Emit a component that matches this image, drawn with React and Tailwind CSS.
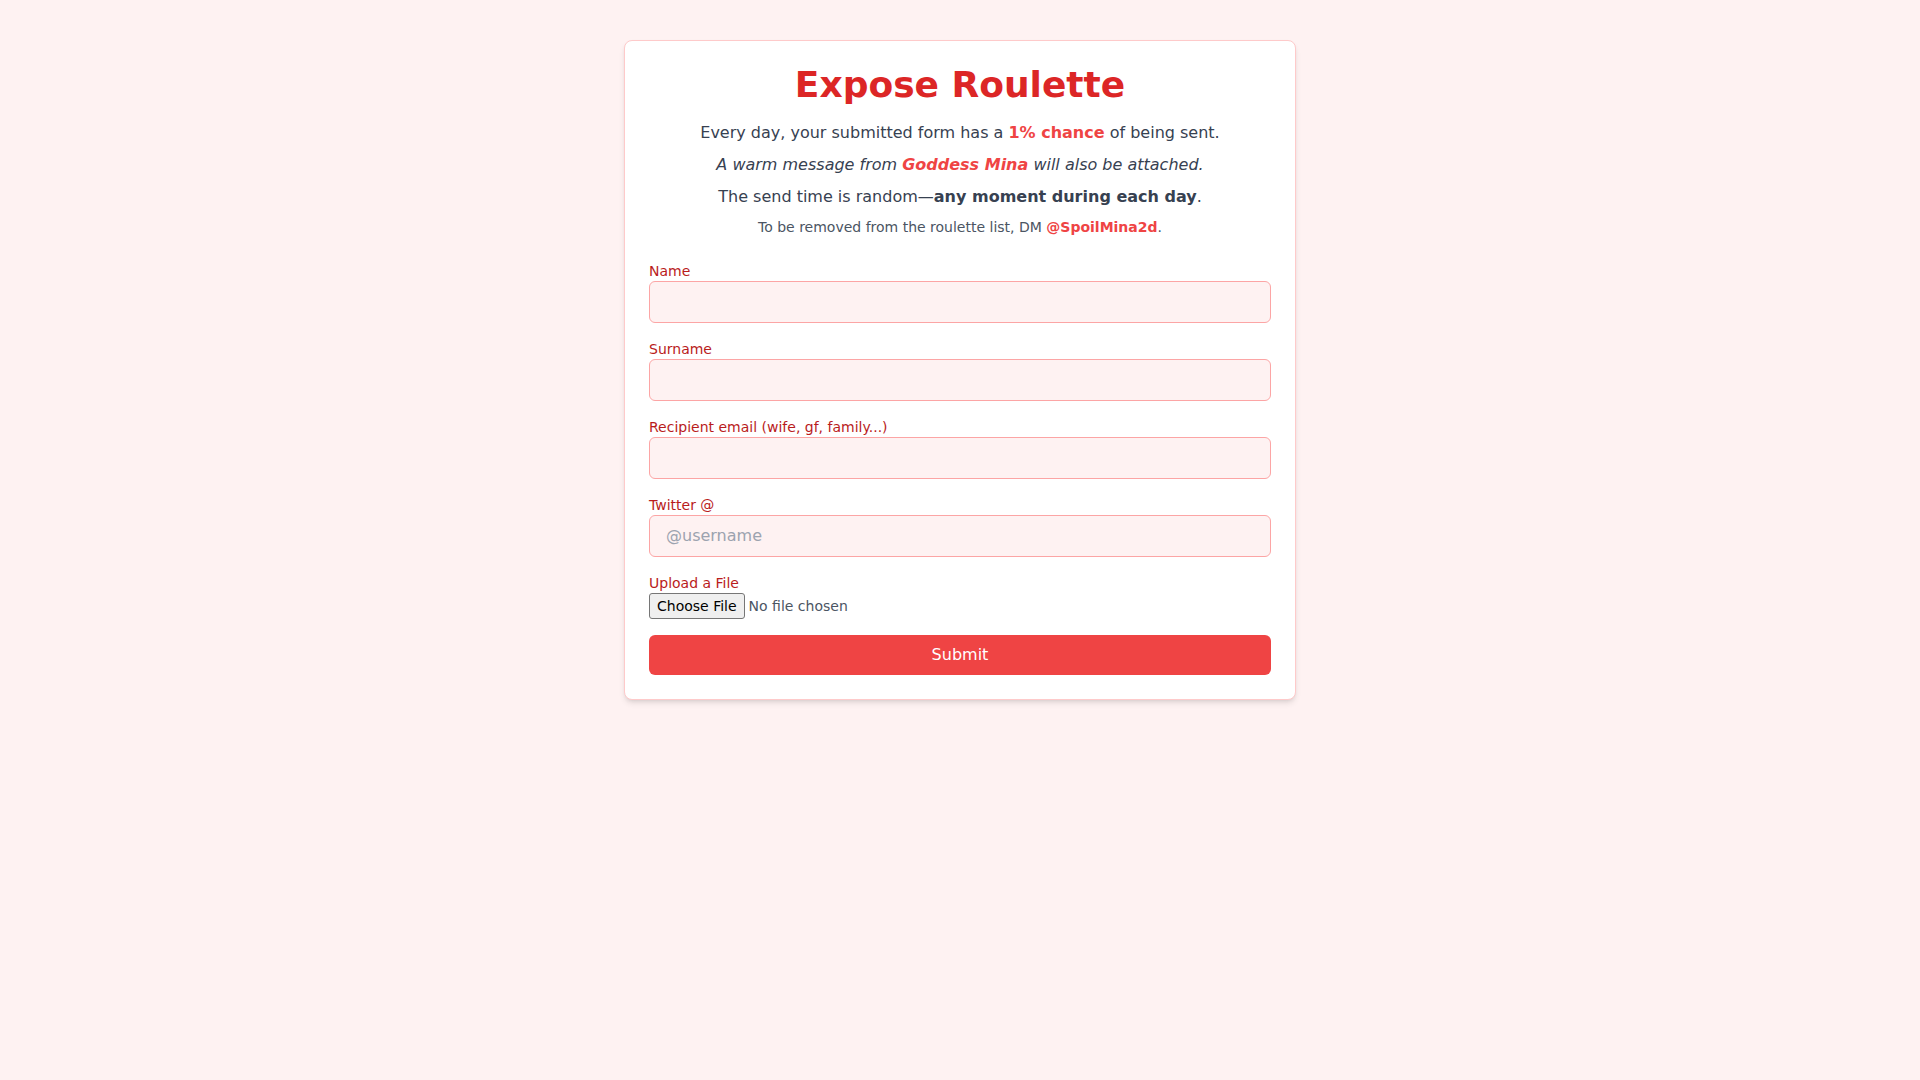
import { useState } from 'react';

const Field = ({ label, type = 'text', placeholder }) => (
  <div>
    <label className="block text-sm text-[#b91c1c]">{label}</label>
    <input
      type={type}
      placeholder={placeholder}
      className="w-full px-4 py-2 text-base bg-[#fef2f2] border border-[#fca5a5] rounded-md text-[#374151] placeholder:text-[#9ca3af] outline-none"
    />
  </div>
);

const App = () => {
  const [sent, setSent] = useState(false);

  return (
    <div className="min-h-screen bg-[#fef2f2] pt-10 font-['DejaVu_Sans',sans-serif]">
      <div className="max-w-2xl mx-auto bg-white border border-[#fecaca] rounded-lg shadow-[0_4px_6px_-1px_rgba(0,0,0,0.1),0_2px_4px_-2px_rgba(0,0,0,0.1)] p-6">
        <h1 className="text-4xl font-bold text-[#dc2626] text-center mb-4">Expose Roulette</h1>
        <p className="text-base text-[#374151] text-center mb-2">
          Every day, your submitted form has a <span className="font-bold text-[#ef4444]">1% chance</span> of being sent.
        </p>
        <p className="text-base text-[#374151] text-center italic mb-2">
          A warm message from <span className="font-bold text-[#ef4444]">Goddess Mina</span> will also be attached.
        </p>
        <p className="text-base text-[#374151] text-center mb-2">
          The send time is random—<span className="font-bold">any moment during each day</span>.
        </p>
        <p className="text-sm text-[#4b5563] text-center">
          To be removed from the roulette list, DM <span className="font-bold text-[#ef4444]">@SpoilMina2d</span>.
        </p>

        <form
          className="mt-6 space-y-4"
          onSubmit={(e) => {
            e.preventDefault();
            setSent(true);
          }}
        >
          <Field label="Name" />
          <Field label="Surname" />
          <Field label="Recipient email (wife, gf, family...)" type="email" />
          <Field label="Twitter @" placeholder="@username" />
          <div>
            <label className="block text-sm text-[#b91c1c]">Upload a File</label>
            <input
              type="file"
              className="block text-sm text-[#4b5563] file:mr-1 file:px-[7px] file:py-[2px] file:text-sm file:text-black file:bg-[#efefef] file:border file:border-solid file:border-[#767676] file:rounded-[3px]"
            />
          </div>
          <button
            type="submit"
            className="w-full py-2 text-base text-white bg-[#ef4444] rounded-md"
          >
            {sent ? 'Submitted' : 'Submit'}
          </button>
        </form>
      </div>
    </div>
  );
};

export default App;
